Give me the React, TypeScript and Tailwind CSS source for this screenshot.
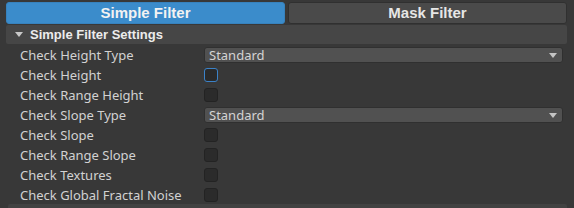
type Row =
  | { label: string; kind: 'select'; value: string }
  | { label: string; kind: 'check'; focused?: boolean };

const rows: Row[] = [
  { label: 'Check Height Type', kind: 'select', value: 'Standard' },
  { label: 'Check Height', kind: 'check', focused: true },
  { label: 'Check Range Height', kind: 'check' },
  { label: 'Check Slope Type', kind: 'select', value: 'Standard' },
  { label: 'Check Slope', kind: 'check' },
  { label: 'Check Range Slope', kind: 'check' },
  { label: 'Check Textures', kind: 'check' },
  { label: 'Check Global Fractal Noise', kind: 'check' },
];

function Dropdown({ value }: { value: string }) {
  return (
    <div className="flex-1 h-[16px] mr-[4px] flex items-center justify-between rounded-[3px] bg-[#515151] border border-[#303030] pl-[4px] pr-[5px] text-[#d4d4d4]">
      <span className="leading-none">{value}</span>
      <span className="w-0 h-0 border-l-[4px] border-r-[4px] border-t-[5px] border-l-transparent border-r-transparent border-t-[#c4c4c4]" />
    </div>
  );
}

function Checkbox({ focused }: { focused?: boolean }) {
  return (
    <div
      className={
        focused
          ? 'w-[14px] h-[14px] rounded-[3px] bg-[#2a2a2a] border border-[#3b82c8]'
          : 'w-[14px] h-[14px] rounded-[3px] bg-[#2b2b2b] border border-[#232323]'
      }
    />
  );
}

export default function App() {
  return (
    <div className="w-[574px] h-[208px] overflow-hidden bg-[#383838] pl-[6px] pr-[7px] pt-[2px] font-['Noto_Sans',sans-serif] text-[13px]">
      <div className="flex gap-[3px] h-[22px]">
        <div className="flex-1 rounded-[3px] bg-[#3b8ccb] border border-[#3782bd] flex items-center justify-center font-['Liberation_Sans',Arial,sans-serif] font-bold text-[15px] text-[#f2f2f2]">
          Simple Filter
        </div>
        <div className="flex-1 rounded-[3px] bg-[#4a4a4a] border border-[#303030] flex items-center justify-center font-['Liberation_Sans',Arial,sans-serif] font-bold text-[15px] text-[#e6e6e6]">
          Mask Filter
        </div>
      </div>
      <div className="mt-[1px] h-[19px] rounded-[2px] bg-[#464646] flex items-center pl-[9px] font-['Liberation_Sans',Arial,sans-serif] font-bold text-[13px] text-[#ececec]">
        <span className="w-0 h-0 border-l-[4px] border-r-[4px] border-t-[5px] border-l-transparent border-r-transparent border-t-[#c8c8c8] mr-[7px]" />
        Simple Filter Settings
      </div>
      <div className="pt-[1px]">
        {rows.map((r) => (
          <div key={r.label} className="h-[20px] flex items-center">
            <div className="w-[198px] pl-[14px] text-[#d2d2d2] whitespace-nowrap leading-none">{r.label}</div>
            {r.kind === 'select' ? <Dropdown value={r.value} /> : <Checkbox focused={r.focused} />}
          </div>
        ))}
      </div>
      <div className="h-[6px] bg-[#424242] rounded-[2px] mt-[-1px] ml-[2px]" />
    </div>
  );
}
